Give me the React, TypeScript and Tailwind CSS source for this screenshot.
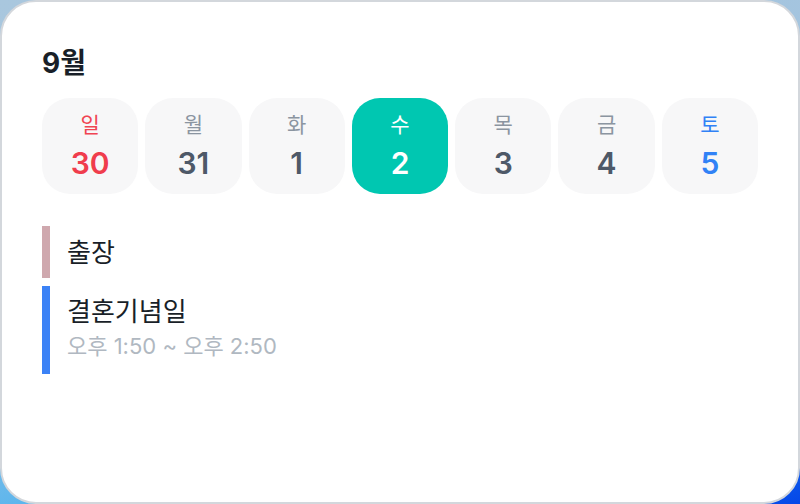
import React from "react";

const days = [
  { label: "일", date: 30, tone: "sun" },
  { label: "월", date: 31, tone: "normal" },
  { label: "화", date: 1, tone: "normal" },
  { label: "수", date: 2, tone: "selected" },
  { label: "목", date: 3, tone: "normal" },
  { label: "금", date: 4, tone: "normal" },
  { label: "토", date: 5, tone: "sat" },
];

function DayCell({ label, date, tone }: { label: string; date: number; tone: string }) {
  const selected = tone === "selected";
  const labelColor =
    tone === "sun" ? "text-[#f04452]" : tone === "sat" ? "text-[#3182f6]" : selected ? "text-white" : "text-[#8b95a1]";
  const dateColor =
    tone === "sun" ? "text-[#f03d4d]" : tone === "sat" ? "text-[#3182f6]" : selected ? "text-white" : "text-[#4e5968]";

  return (
    <div
      className={`flex h-24 flex-col items-center justify-center rounded-[28px] ${
        selected ? "bg-[#00c7b1]" : "bg-[#f7f7f8]"
      }`}
    >
      <span className={`text-[21px] leading-[26px] ${labelColor}`}>{label}</span>
      <span className={`mt-[8px] text-[30px] font-semibold leading-[34px] ${dateColor}`}>{date}</span>
    </div>
  );
}

export default function App() {
  return (
    <div className="h-[504px] w-[800px] overflow-hidden bg-[linear-gradient(160deg,#a9c7de_0%,#a3c4df_45%,#36aef5_75%,#0547e8_100%)]">
      <div
        className="h-full w-full rounded-[36px] border-2 border-[#d3d7dc] bg-white px-[40px] pt-[43px]"
        style={{ fontFamily: 'Inter, "Noto Sans CJK KR", sans-serif' }}
      >
        <h1 className="text-[28px] font-bold leading-[36px] text-[#191f28]">9월</h1>

        <div className="mt-[17px] grid grid-cols-7 gap-[7px]">
          {days.map((d) => (
            <DayCell key={d.label} {...d} />
          ))}
        </div>

        <div className="mt-[32px] flex flex-col gap-2">
          <div className="flex h-[52px] items-stretch">
            <div className="w-2 bg-[#cfa8ae]" />
            <div className="flex items-center pl-[17px] text-[26px] text-[#191f28]">출장</div>
          </div>
          <div className="flex h-[88px] items-stretch">
            <div className="w-2 bg-[#3b82f6]" />
            <div className="flex flex-col pl-[17px] pt-[10px]">
              <span className="text-[26px] leading-[32px] text-[#191f28]">결혼기념일</span>
              <span className="mt-[3px] text-[22px] leading-[30px] text-[#b0b8c1]">오후 1:50 ~ 오후 2:50</span>
            </div>
          </div>
        </div>
      </div>
    </div>
  );
}
